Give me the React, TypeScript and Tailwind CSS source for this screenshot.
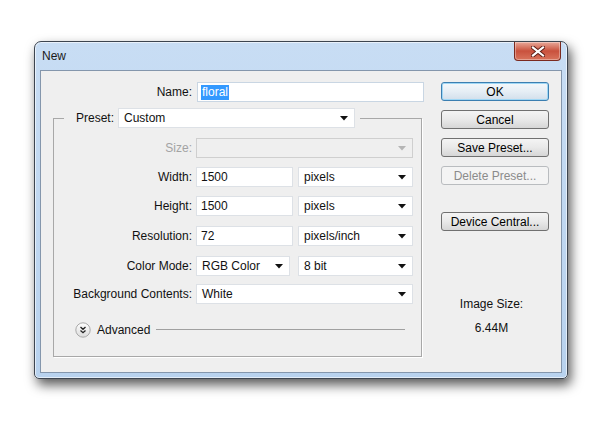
import React from "react";

function Arrow({ disabled }: { disabled?: boolean }) {
  return (
    <svg width="8" height="5" viewBox="0 0 8 5" className="shrink-0">
      <polygon points="0,0 8,0 4,4.5" fill={disabled ? "#b5b5b5" : "#111"} />
    </svg>
  );
}

function Select({
  value,
  className,
  disabled,
}: {
  value?: string;
  className: string;
  disabled?: boolean;
}) {
  return (
    <div
      className={`flex h-[20px] items-center justify-between border pl-[5px] pr-[6px] ${
        disabled ? "border-[#cfcfcf] bg-[#efefef]" : "border-[#dde1e6] bg-white"
      } ${className}`}
    >
      <span>{value}</span>
      <Arrow disabled={disabled} />
    </div>
  );
}

function TextBox({ value, className }: { value: string; className: string }) {
  return (
    <div
      className={`flex h-[20px] items-center border border-[#dde1e6] bg-white pl-[4px] ${className}`}
    >
      {value}
    </div>
  );
}

function Button({
  label,
  focused,
  disabled,
  className = "",
}: {
  label: string;
  focused?: boolean;
  disabled?: boolean;
  className?: string;
}) {
  let look =
    "border-[#707070] bg-linear-to-b from-[#f4f4f4] via-[#e9e9e9] to-[#d6d6d6] text-black";
  if (focused)
    look =
      "border-[#3c7fb1] bg-linear-to-b from-[#f4f8fb] via-[#e6eef5] to-[#d2dfeb] text-black shadow-[inset_0_0_0_1px_#9fd7f5]";
  if (disabled) look = "border-[#b9bcbf] bg-[#f4f4f4] text-[#8b8b8b]";
  return (
    <div
      className={`flex h-[19px] w-[108px] items-center justify-center rounded-[3px] border ${look} ${className}`}
    >
      {label}
    </div>
  );
}

function Row({
  label,
  dim,
  className = "",
  children,
}: {
  label: string;
  dim?: boolean;
  className?: string;
  children: React.ReactNode;
}) {
  return (
    <div className={`flex h-[20px] items-center ${className}`}>
      <div className={`w-[138px] text-right ${dim ? "text-[#a3a3a3]" : ""}`}>{label}</div>
      <div className="ml-[4px] flex">{children}</div>
    </div>
  );
}

function AdvancedIcon() {
  return (
    <svg width="16" height="16" viewBox="0 0 16 16" className="shrink-0">
      <defs>
        <linearGradient id="adv" x1="0" y1="0" x2="0" y2="1">
          <stop offset="0" stopColor="#fdfdfd" />
          <stop offset="1" stopColor="#dcdcdc" />
        </linearGradient>
      </defs>
      <circle cx="8" cy="8" r="7.2" fill="url(#adv)" stroke="#a9a9a9" />
      <path d="M5.5 5 L8 7.3 L10.5 5 M5.5 8.4 L8 10.7 L10.5 8.4" fill="none" stroke="#222" strokeWidth="1.3" />
    </svg>
  );
}

function CloseButton() {
  return (
    <div className="flex h-[19px] w-[47px] items-center justify-center rounded-b-[4px] border border-t-0 border-[#7b2a1f] bg-linear-to-b from-[#e8a899] via-[#c9513d] to-[#d8735c] shadow-[inset_0_0_0_1px_rgba(255,255,255,0.35)]">
      <svg width="14" height="11" viewBox="0 0 14 11">
        <path d="M2 1.5 L12 9.5 M12 1.5 L2 9.5" stroke="#5a1c14" strokeWidth="4" strokeLinecap="square" />
        <path d="M2 1.5 L12 9.5 M12 1.5 L2 9.5" stroke="#fff" strokeWidth="2.2" strokeLinecap="square" />
      </svg>
    </div>
  );
}

export default function App() {
  return (
    <div className="h-[428px] w-[600px] overflow-hidden bg-white pl-[34px] pt-[41px] font-['Liberation_Sans',sans-serif] text-[12px] leading-[14px] text-[#111]">
      <div className="h-[338px] w-[534px] rounded-t-[7px] rounded-b-[5px] border border-[#3d4550] bg-linear-to-b from-[#c8ddf4] to-[#b8d2ee] shadow-[3px_6px_12px_rgba(0,0,0,0.65),inset_0_0_0_1px_rgba(255,255,255,0.6)]">
        {/* title bar */}
        <div className="flex h-[28px] items-start justify-between pl-[7px] pr-[6px]">
          <div className="pt-[7px] text-[12px] text-[#1a1a1a]">New</div>
          <CloseButton />
        </div>

        {/* client area */}
        <div className="px-[5px]">
          <div className="flex h-[303px] border border-[#8496ac] bg-[#efefef]">
            {/* left column */}
            <div className="w-[400px]">
              <div className="mt-[11px] flex h-[20px] items-center">
                <div className="w-[151px] text-right">Name:</div>
                <div className="ml-[5px] flex h-[20px] w-[227px] items-center border border-[#c9d6e3] bg-white pl-[3px]">
                  <span className="bg-[#3399ff] px-[1px] leading-[15px] text-white">floral</span>
                </div>
              </div>

              <fieldset className="ml-[12px] mt-[6px] h-[249px] w-[369px] border border-[#a8a8a8] shadow-[1px_1px_0_#fff]">
                <legend className="ml-[10px] flex items-center pl-[12px] pr-[5px]">
                  <span>Preset:</span>
                  <Select value="Custom" className="ml-[4px] w-[237px]" />
                </legend>

                <Row label="Size:" dim className="mt-[10px]">
                  <Select className="w-[217px]" disabled />
                </Row>
                <Row label="Width:" className="mt-[9px]">
                  <TextBox value="1500" className="w-[97px]" />
                  <Select value="pixels" className="ml-[5px] w-[115px]" />
                </Row>
                <Row label="Height:" className="mt-[9px]">
                  <TextBox value="1500" className="w-[97px]" />
                  <Select value="pixels" className="ml-[5px] w-[115px]" />
                </Row>
                <Row label="Resolution:" className="mt-[10px]">
                  <TextBox value="72" className="w-[97px]" />
                  <Select value="pixels/inch" className="ml-[5px] w-[115px]" />
                </Row>
                <Row label="Color Mode:" className="mt-[10px]">
                  <Select value="RGB Color" className="w-[94px]" />
                  <Select value="8 bit" className="ml-[8px] w-[115px]" />
                </Row>
                <Row label="Background Contents:" className="mt-[8px]">
                  <Select value="White" className="w-[217px]" />
                </Row>

                <div className="mt-[18px] flex items-center pl-[21px] pr-[16px]">
                  <AdvancedIcon />
                  <span className="ml-[6px]">Advanced</span>
                  <div className="ml-[6px] h-[2px] flex-1 border-t border-[#a0a0a0] border-b-white" />
                </div>
              </fieldset>
            </div>

            {/* right column */}
            <div className="flex w-[108px] flex-col">
              <Button label="OK" focused className="mt-[11px]" />
              <Button label="Cancel" className="mt-[9px]" />
              <Button label="Save Preset..." className="mt-[9px]" />
              <Button label="Delete Preset..." disabled className="mt-[9px]" />
              <Button label="Device Central..." className="mt-[27px]" />
              <div className="mt-[66px] pr-[7px] text-center">Image Size:</div>
              <div className="mt-[10px] pr-[7px] text-center">6.44M</div>
            </div>
          </div>
        </div>
      </div>
    </div>
  );
}
